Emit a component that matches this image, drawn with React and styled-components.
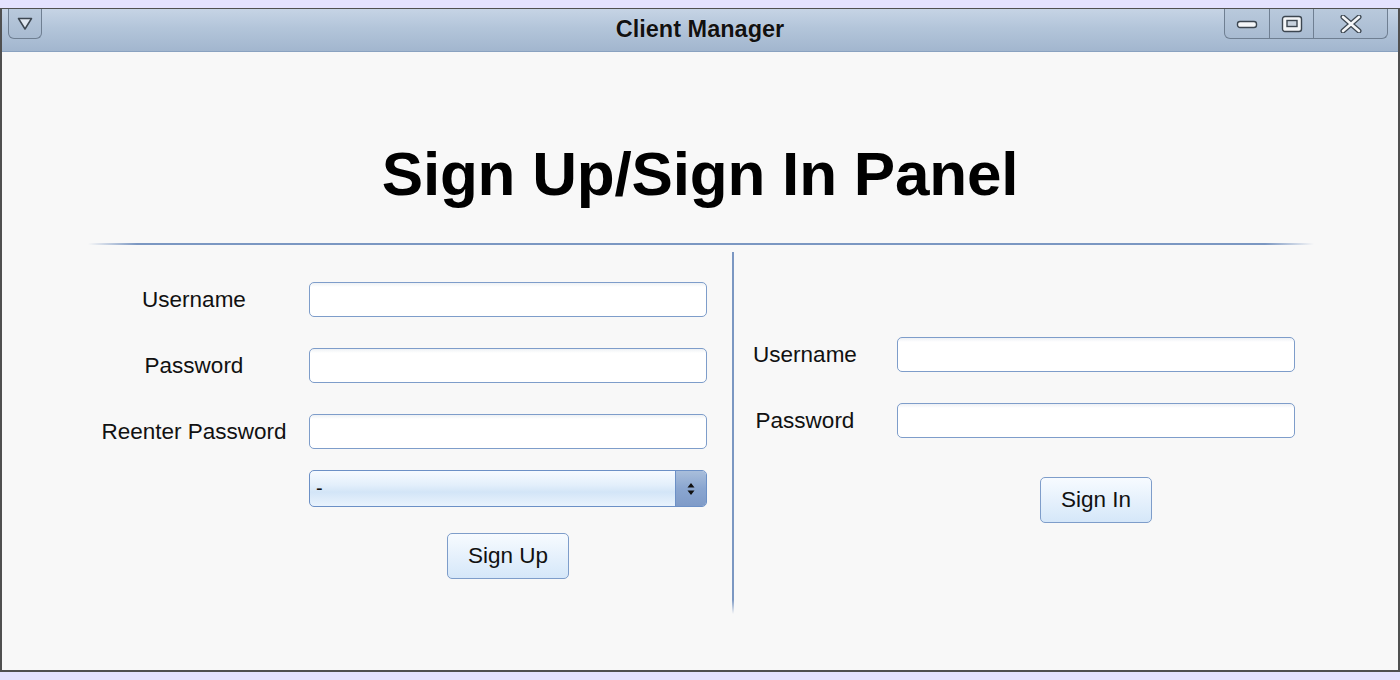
import React from 'react';
import styled, { createGlobalStyle } from 'styled-components';

const GlobalStyle = createGlobalStyle`
  html, body {
    margin: 0;
    padding: 0;
    background: #e4e2fe;
  }
  body {
    padding-top: 8px;
    font-family: "Liberation Sans", Arial, sans-serif;
  }
`;

// Window frame
const Frame = styled.div`
  width: 1400px;
  height: 664px;
  box-sizing: border-box;
  border: 2px solid #505050;
  border-top-width: 1px;
  background: #f8f8f8;
  display: flex;
  flex-direction: column;
`;

const TitleBar = styled.div`
  height: 43px;
  flex-shrink: 0;
  box-sizing: border-box;
  position: relative;
  display: flex;
  align-items: flex-start;
  justify-content: space-between;
  padding: 0 10px 0 6px;
  background: linear-gradient(to bottom, #c6d4e5 0%, #b3c5da 45%, #a2b6ce 100%);
  border-bottom: 1px solid #8aa2c0;
`;

const Title = styled.div`
  position: absolute;
  left: 0;
  right: 0;
  top: 7px;
  text-align: center;
  font-weight: bold;
  font-size: 23.5px;
  color: #111;
  text-shadow: 0 0 1px rgba(255, 255, 255, 0.6);
  pointer-events: none;
`;

const CtrlGroup = styled.div`
  display: flex;
  height: 29px;
  border: 1px solid #6f7f92;
  border-top: none;
  border-radius: 0 0 6px 6px;
  background: linear-gradient(to bottom, #b9c9dc, #a8bbd1);
  position: relative;
  z-index: 1;
`;

const CtrlCell = styled.div`
  width: ${p => p.w}px;
  display: flex;
  align-items: center;
  justify-content: center;
  & + & {
    border-left: 1px solid #6f7f92;
  }
`;

// Content
const Content = styled.div`
  flex: 1;
  display: flex;
  flex-direction: column;
  align-items: center;
`;

const Heading = styled.h1`
  margin: 86px 0 0;
  height: 72px;
  line-height: 72px;
  font-size: 62px;
  font-weight: bold;
  color: #000;
  letter-spacing: -0.2px;
`;

const Separator = styled.div`
  margin-top: 33px;
  margin-left: 2px;
  width: 1226px;
  height: 2px;
  background: linear-gradient(to right, rgba(123,151,194,0) 0%, #7b97c2 4%, #7b97c2 96%, rgba(123,151,194,0) 100%);
`;

const Columns = styled.div`
  margin-top: 7px;
  margin-left: 2px;
  width: 1226px;
  display: flex;
`;

const Column = styled.div`
  width: ${p => p.w}px;
  box-sizing: border-box;
  padding-top: ${p => p.top}px;
  display: flex;
  flex-direction: column;
`;

const Divider = styled.div`
  width: 2px;
  height: 362px;
  background: linear-gradient(to bottom, #7b97c2 0%, #7b97c2 96%, rgba(123,151,194,0) 100%);
`;

const Row = styled.div`
  display: flex;
  align-items: center;
  height: ${p => p.h || 35}px;
  margin-top: ${p => p.gap || 0}px;
`;

const Label = styled.div`
  width: ${p => p.w}px;
  text-align: center;
  font-size: 22.5px;
  color: #111;
  margin-right: ${p => p.mr}px;
  padding-top: 1px;
`;

const Field = styled.input`
  width: 398px;
  height: 35px;
  box-sizing: border-box;
  border: 1px solid #7e9dca;
  border-radius: 5px;
  background: linear-gradient(to bottom, #eef1f5 0px, #ffffff 4px);
  outline: none;
  padding: 0 6px;
  font-size: 20px;
  font-family: "Liberation Sans", Arial, sans-serif;
`;

const Combo = styled.div`
  width: 398px;
  height: 37px;
  box-sizing: border-box;
  border: 1px solid #6c90c6;
  border-radius: 5px;
  overflow: hidden;
  display: flex;
  background: linear-gradient(to bottom, #f6faff 0%, #e3effb 40%, #d3e5f7 60%, #e9f3fd 100%);
`;

const ComboText = styled.div`
  flex: 1;
  padding-left: 6px;
  display: flex;
  align-items: center;
  font-size: 20px;
  color: #111;
`;

const ComboArrow = styled.div`
  width: 30px;
  border-left: 1px solid #6c90c6;
  background: linear-gradient(to bottom, #a9bedb 0%, #8aa6d0 50%, #7f9bc8 100%);
  display: flex;
  align-items: center;
  justify-content: center;
`;

const Button = styled.button`
  height: 46px;
  width: ${p => p.w}px;
  box-sizing: border-box;
  border: 1px solid #7e9dca;
  border-radius: 5px;
  background: linear-gradient(to bottom, #f7fbff 0%, #e6f1fc 50%, #d5e7f9 100%);
  font-family: "Liberation Sans", Arial, sans-serif;
  font-size: 22.5px;
  color: #111;
  padding: 0;
`;

const ButtonRow = styled.div`
  display: flex;
  margin-top: ${p => p.gap}px;
  padding-left: ${p => p.left}px;
`;

export default function App() {
  return (
    <>
      <GlobalStyle />
      <Frame>
        <TitleBar>
          <CtrlGroup>
            <CtrlCell w={32}>
              <svg width="16" height="14" viewBox="0 0 16 14">
                <path d="M1.5 1.5 H14.5 L8 12 Z" fill="#dfe7f0" stroke="#3c4650" strokeWidth="1.5" strokeLinejoin="round" />
              </svg>
            </CtrlCell>
          </CtrlGroup>
          <Title>Client Manager</Title>
          <CtrlGroup>
            <CtrlCell w={44}>
              <svg width="22" height="10" viewBox="0 0 22 10">
                <rect x="1.5" y="2.5" width="19" height="6" rx="2.5" fill="#f4f6f8" stroke="#3c4650" strokeWidth="1.4" />
              </svg>
            </CtrlCell>
            <CtrlCell w={43}>
              <svg width="22" height="18" viewBox="0 0 22 18">
                <rect x="1.5" y="1.5" width="19" height="15" rx="2.5" fill="#f4f6f8" stroke="#3c4650" strokeWidth="1.4" />
                <rect x="6" y="5.5" width="10" height="6" fill="#c8d2de" stroke="#3c4650" strokeWidth="1.4" />
              </svg>
            </CtrlCell>
            <CtrlCell w={73}>
              <svg width="22" height="18" viewBox="0 0 22 18">
                <path d="M3 2 L19 16 M19 2 L3 16" stroke="#3c4650" strokeWidth="5" strokeLinecap="round" />
                <path d="M3 2 L19 16 M19 2 L3 16" stroke="#f4f6f8" strokeWidth="2.6" strokeLinecap="round" />
              </svg>
            </CtrlCell>
          </CtrlGroup>
        </TitleBar>
        <Content>
          <Heading>Sign Up/Sign In Panel</Heading>
          <Separator />
          <Columns>
            <Column w={644} top={30}>
              <Row>
                <Label w={212} mr={9}>Username</Label>
                <Field />
              </Row>
              <Row gap={31}>
                <Label w={212} mr={9}>Password</Label>
                <Field type="password" />
              </Row>
              <Row gap={31}>
                <Label w={212} mr={9}>Reenter Password</Label>
                <Field type="password" />
              </Row>
              <Row gap={21} h={37}>
                <Label w={212} mr={9} />
                <Combo>
                  <ComboText>-</ComboText>
                  <ComboArrow>
                    <svg width="8" height="14" viewBox="0 0 8 14">
                      <path d="M4 1 L7.5 5.5 H0.5 Z M4 13 L7.5 8.5 H0.5 Z" fill="#111" />
                    </svg>
                  </ComboArrow>
                </Combo>
              </Row>
              <ButtonRow gap={26} left={359}>
                <Button w={122}>Sign Up</Button>
              </ButtonRow>
            </Column>
            <Divider />
            <Column w={580} top={85}>
              <Row>
                <Label w={142} mr={21}>Username</Label>
                <Field />
              </Row>
              <Row gap={31}>
                <Label w={142} mr={21}>Password</Label>
                <Field type="password" />
              </Row>
              <ButtonRow gap={39} left={306}>
                <Button w={112}>Sign In</Button>
              </ButtonRow>
            </Column>
          </Columns>
        </Content>
      </Frame>
    </>
  );
}
